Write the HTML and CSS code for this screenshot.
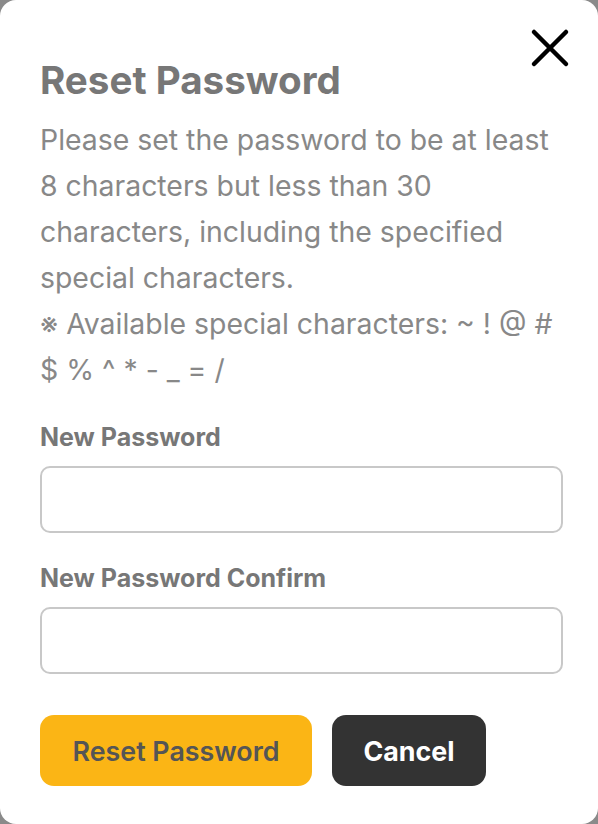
FILE: index.html
```html
<!DOCTYPE html>
<html>
<head>
<meta charset="utf-8">
<link rel="stylesheet" href="styles.css">
</head>
<body>
<div class="modal">
  <button class="close" aria-label="Close">
    <svg width="40" height="40" viewBox="0 0 40 40"><path d="M4 4 L36 36 M36 4 L4 36" stroke="#000" stroke-width="4.5" stroke-linecap="round"/></svg>
  </button>
  <h1 class="title">Reset Password</h1>
  <p class="desc">Please set the password to be at least 8 characters but less than 30 characters, including the specified special characters.<br>※ Available special characters: ~ ! @ # $ % ^ * - _ = /</p>
  <label class="label label-first">New Password</label>
  <input class="input" type="password">
  <label class="label">New Password Confirm</label>
  <input class="input" type="password">
  <div class="actions">
    <button class="btn btn-primary">Reset Password</button>
    <button class="btn btn-dark">Cancel</button>
  </div>
</div>
</body>
</html>
```
FILE: styles.css
```css
html { background: #8a8a8a; }
body { margin: 0; font-family: Inter, "Noto Sans", sans-serif; }
.modal {
  position: relative;
  width: 598px;
  height: 824px;
  box-sizing: border-box;
  background: #fff;
  border-radius: 16px;
  padding: 58px 35px 0 40px;
}
.close {
  position: absolute;
  top: 28px;
  right: 28px;
  width: 40px;
  height: 40px;
  padding: 0;
  border: 0;
  background: none;
}
.close svg { display: block; }
.title {
  margin: 0;
  font-size: 38.6px;
  line-height: 44px;
  font-weight: 700;
  color: #777;
}
.desc {
  margin: 15px 0 0;
  font-size: 28.4px;
  line-height: 46px;
  color: #888;
  width: 523px;
}
.label {
  display: block;
  margin-top: 30px;
  font-size: 25px;
  line-height: 30px;
  font-weight: 700;
  color: #777;
}
.label-first { margin-top: 29px; }
.input {
  display: block;
  box-sizing: border-box;
  width: 523px;
  height: 67px;
  margin-top: 14px;
  border: 2px solid #c8c8c8;
  border-radius: 10px;
  background: #fff;
}
.actions {
  display: flex;
  gap: 20px;
  margin-top: 41px;
}
.btn {
  height: 71px;
  border: 0;
  border-radius: 14px;
  font-family: Inter, "Noto Sans", sans-serif;
  font-size: 26.8px;
  font-weight: 600;
  padding: 0;
}
.btn-primary { background: #fbb515; color: #555; width: 272px; }
.btn-dark { background: #333; color: #fff; width: 154px; font-weight: 700; }
```
